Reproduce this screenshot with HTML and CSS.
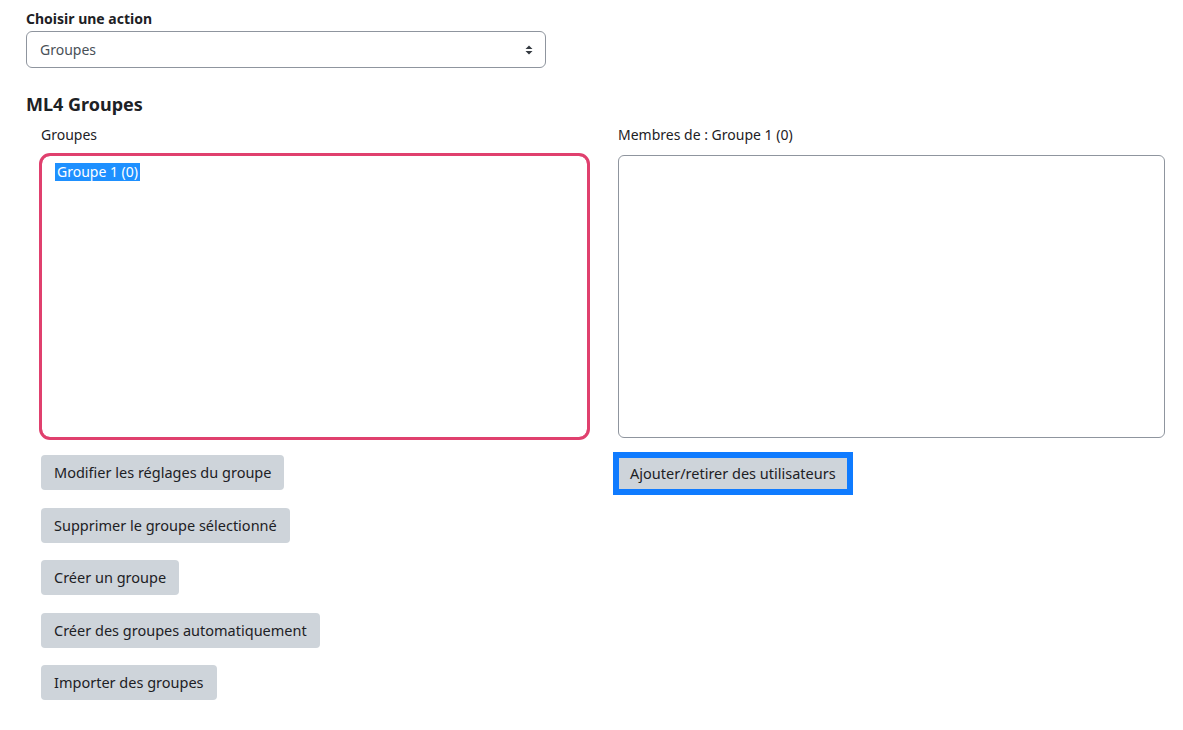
FILE: index.html
```html
<!DOCTYPE html>
<html lang="fr">

<head>
  <meta charset="UTF-8">
  <meta name="viewport" content="width=device-width, initial-scale=1.0">
  <title>Groupes</title>
  <link rel="stylesheet" href="styles.css">
</head>

<body>
  <div class="page">
    <div class="action">
      <label class="action-label">Choisir une action</label>
      <div class="select">
        <span>Groupes</span>
        <svg class="caret" width="8" height="10" viewBox="0 0 8 10">
          <path d="M4 0.5 L7.5 4 L0.5 4 Z M4 9.5 L7.5 6 L0.5 6 Z" fill="#343a40"/>
        </svg>
      </div>
    </div>

    <h3 class="title">ML4 Groupes</h3>

    <div class="cols">
      <div class="col">
        <div class="col-label">Groupes</div>
        <div class="listbox focused">
          <span class="option selected">Groupe 1 (0)</span>
        </div>
        <div class="buttons">
          <div><span class="btn">Modifier les réglages du groupe</span></div>
          <div><span class="btn">Supprimer le groupe sélectionné</span></div>
          <div><span class="btn">Créer un groupe</span></div>
          <div><span class="btn">Créer des groupes automatiquement</span></div>
          <div><span class="btn">Importer des groupes</span></div>
        </div>
      </div>
      <div class="col">
        <div class="col-label">Membres de : Groupe 1 (0)</div>
        <div class="listbox"></div>
        <div class="buttons">
          <div><span class="btn active">Ajouter/retirer des utilisateurs</span></div>
        </div>
      </div>
    </div>
  </div>
</body>

</html>
```

FILE: styles.css
```css
* {
  margin: 0;
  padding: 0;
  box-sizing: border-box;
}

body {
  background-color: #fff;
  font-family: "Noto Sans", "Open Sans", sans-serif;
  font-size: 14px;
  color: #1d2125;
}

.page {
  padding: 10px 18px 0 26px;
}

.action-label {
  display: block;
  font-weight: bold;
  font-size: 14px;
  line-height: 18px;
}

.select {
  width: 520px;
  height: 37px;
  margin-top: 3px;
  border: 1px solid #8f959e;
  border-radius: 6px;
  display: flex;
  align-items: center;
  justify-content: space-between;
  padding: 0 12px 0 13px;
  color: #495057;
  font-size: 14px;
}

.title {
  font-size: 18px;
  font-weight: bold;
  margin-top: 24px;
  line-height: 24px;
}

.cols {
  display: flex;
  gap: 30px;
  padding-left: 15px;
  margin-top: 9px;
}

.col {
  width: 547px;
}

.col-label {
  font-size: 14px;
  line-height: 20px;
  height: 30px;
}

.listbox {
  height: 283px;
  border: 1px solid #8f959e;
  border-radius: 6px;
  padding: 6px 12px;
}

.listbox.focused {
  border-color: #e0406e;
  outline: 3px solid #e0406e;
  outline-offset: -1px;
  border-radius: 9px;
}

.option.selected {
  background-color: #1e90ff;
  color: #fff;
  padding: 0 2px;
  line-height: 18px;
  display: inline-block;
  margin-left: 1px;
}

.buttons {
  margin-top: 17px;
}

.buttons div {
  height: 52.5px;
}

.btn {
  display: inline-block;
  background-color: #ced4da;
  border-radius: 4px;
  padding: 0 13px;
  height: 35px;
  line-height: 35px;
  font-size: 14.5px;
  color: #1d2125;
}

.btn.active {
  height: 31px;
  line-height: 31px;
  padding: 0 11px;
  margin-top: 3px;
  margin-left: 1px;
  outline: 6px solid #0f7bff;
  border-radius: 0;
}
```
